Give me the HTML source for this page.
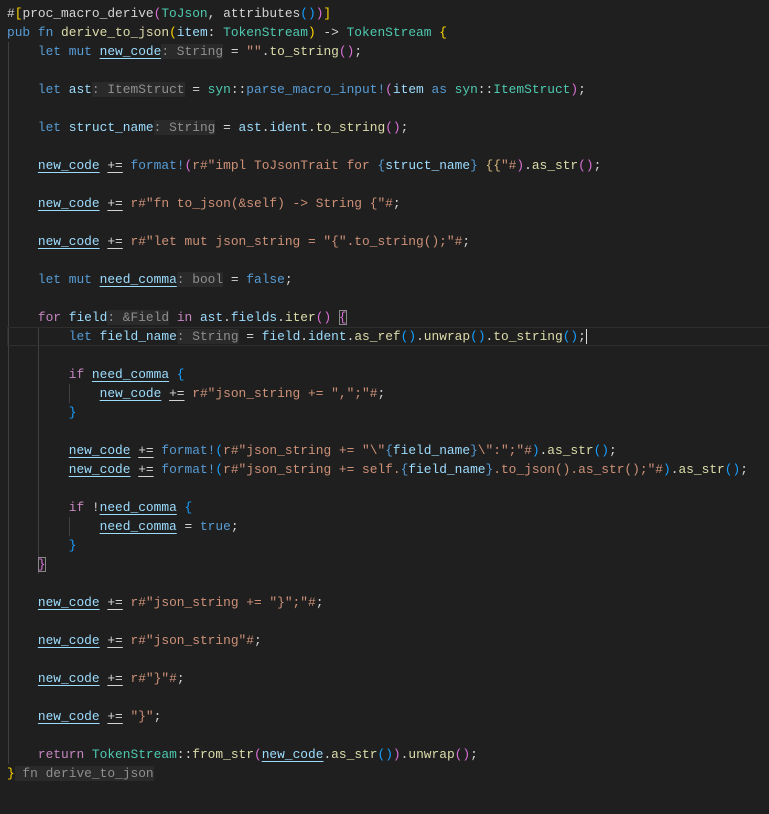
<!DOCTYPE html>
<html><head><meta charset="utf-8"><style>
html,body{margin:0;padding:0;background:#1f1f1f;width:769px;height:814px;overflow:hidden}
pre{position:absolute;left:7px;top:4px;margin:0;font-family:"Liberation Mono",monospace;font-size:12.87px;line-height:19px;color:#d4d4d4;white-space:pre}
.k{color:#569cd6}.c{color:#c586c0}.v{color:#9cdcfe}.t{color:#4ec9b0}.f{color:#dcdcaa}.s{color:#ce9178}.e{color:#d7ba7d}
.h{color:#8f8f8f;background:#2a2a2a}
.u{text-decoration:underline;text-underline-offset:3px}
.b1{color:#ffd700}.b2{color:#da70d6}.b3{color:#179fff}
.bx{outline:1px solid #888;outline-offset:-1px}
.g{position:absolute;width:1px;background:#404040}
.cur{position:absolute;left:7px;width:762px;top:327px;height:17px;border:1px solid #2e2e2e}
</style></head><body>
<div class="g" style="left:8px;top:42px;height:722px"></div>
<div class="g" style="left:38px;top:327px;height:247px"></div>
<div class="g" style="left:69px;top:384px;height:19px"></div>
<div class="g" style="left:69px;top:517px;height:19px"></div>
<div class="cur"></div>
<pre>#<span class="b1">[</span>proc_macro_derive<span class="b2">(</span><span class="t">ToJson</span>, attributes<span class="b3">()</span><span class="b2">)</span><span class="b1">]</span>
<span class="k">pub fn</span> <span class="f">derive_to_json</span><span class="b1">(</span><span class="v">item</span>: <span class="t">TokenStream</span><span class="b1">)</span> -&gt; <span class="t">TokenStream</span> <span class="b1">{</span>
    <span class="k">let mut</span> <span class="v u">new_code</span><span class="h">: String</span> = <span class="s">""</span>.<span class="f">to_string</span><span class="b2">()</span>;

    <span class="k">let</span> <span class="v">ast</span><span class="h">: ItemStruct</span> = <span class="t">syn</span>::<span class="k">parse_macro_input!</span><span class="b2">(</span><span class="v">item</span> <span class="k">as</span> <span class="t">syn</span>::<span class="t">ItemStruct</span><span class="b2">)</span>;

    <span class="k">let</span> <span class="v">struct_name</span><span class="h">: String</span> = <span class="v">ast</span>.<span class="v">ident</span>.<span class="f">to_string</span><span class="b2">()</span>;

    <span class="v u">new_code</span> <span class="u">+=</span> <span class="k">format!</span><span class="b2">(</span><span class="s">r#"impl ToJsonTrait for </span><span class="k">{</span><span class="v">struct_name</span><span class="k">}</span><span class="s"> </span><span class="e">{{</span><span class="s">"#</span><span class="b2">)</span>.<span class="f">as_str</span><span class="b2">()</span>;

    <span class="v u">new_code</span> <span class="u">+=</span> <span class="s">r#"fn to_json(&amp;self) -&gt; String {"#</span>;

    <span class="v u">new_code</span> <span class="u">+=</span> <span class="s">r#"let mut json_string = "{".to_string();"#</span>;

    <span class="k">let mut</span> <span class="v u">need_comma</span><span class="h">: bool</span> = <span class="k">false</span>;

    <span class="c">for</span> <span class="v">field</span><span class="h">: &amp;Field</span> <span class="c">in</span> <span class="v">ast</span>.<span class="v">fields</span>.<span class="f">iter</span><span class="b2">()</span> <span class="b2 bx">{</span>
        <span class="k">let</span> <span class="v">field_name</span><span class="h">: String</span> = <span class="v">field</span>.<span class="v">ident</span>.<span class="f">as_ref</span><span class="b3">()</span>.<span class="f">unwrap</span><span class="b3">()</span>.<span class="f">to_string</span><span class="b3">()</span>;<span style="border-left:1px solid #ddd"></span>

        <span class="c">if</span> <span class="v u">need_comma</span> <span class="b3">{</span>
            <span class="v u">new_code</span> <span class="u">+=</span> <span class="s">r#"json_string += ",";"#</span>;
        <span class="b3">}</span>

        <span class="v u">new_code</span> <span class="u">+=</span> <span class="k">format!</span><span class="b3">(</span><span class="s">r#"json_string += "\"</span><span class="k">{</span><span class="v">field_name</span><span class="k">}</span><span class="s">\":";"#</span><span class="b3">)</span>.<span class="f">as_str</span><span class="b3">()</span>;
        <span class="v u">new_code</span> <span class="u">+=</span> <span class="k">format!</span><span class="b3">(</span><span class="s">r#"json_string += self.</span><span class="k">{</span><span class="v">field_name</span><span class="k">}</span><span class="s">.to_json().as_str();"#</span><span class="b3">)</span>.<span class="f">as_str</span><span class="b3">()</span>;

        <span class="c">if</span> !<span class="v u">need_comma</span> <span class="b3">{</span>
            <span class="v u">need_comma</span> = <span class="k">true</span>;
        <span class="b3">}</span>
    <span class="b2 bx">}</span>

    <span class="v u">new_code</span> <span class="u">+=</span> <span class="s">r#"json_string += "}";"#</span>;

    <span class="v u">new_code</span> <span class="u">+=</span> <span class="s">r#"json_string"#</span>;

    <span class="v u">new_code</span> <span class="u">+=</span> <span class="s">r#"}"#</span>;

    <span class="v u">new_code</span> <span class="u">+=</span> <span class="s">"}"</span>;

    <span class="c">return</span> <span class="t">TokenStream</span>::<span class="f">from_str</span><span class="b2">(</span><span class="v u">new_code</span>.<span class="f">as_str</span><span class="b3">()</span><span class="b2">)</span>.<span class="f">unwrap</span><span class="b2">()</span>;
<span class="b1">}</span><span class="h"> fn derive_to_json</span></pre>
</body></html>
